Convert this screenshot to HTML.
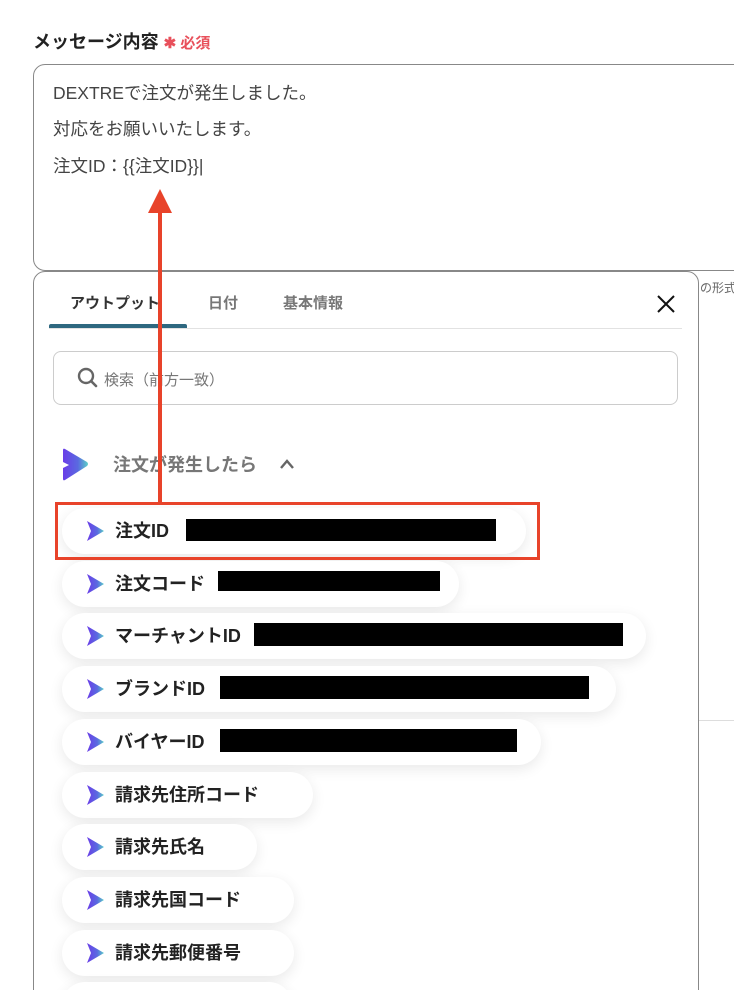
<!DOCTYPE html>
<html><head><meta charset="utf-8"><style>
*{box-sizing:border-box;margin:0;padding:0}
html,body{width:734px;height:990px;overflow:hidden}
body{background:#fff;font-family:"Liberation Sans","Noto Sans CJK JP",sans-serif;color:#333}
#w{position:relative;width:734px;height:990px;overflow:hidden}
.abs{position:absolute}
.label{left:33px;top:28px;font-size:18px;font-weight:bold;color:#222}
.label span{color:#e8505b;font-size:15px}
.ta{left:33px;top:64px;width:740px;height:207px;border:1px solid #888;border-radius:12px}
.ta p{position:absolute;left:19px;font-size:17.5px;color:#444}
.panel{left:33px;top:271px;width:666px;height:760px;border:1px solid #888;border-radius:12px;background:#fff}
.tab{top:292px;font-size:15px;font-weight:bold;color:#777}
.pill{position:absolute;left:62px;height:46px;border-radius:23px;background:#fff;box-shadow:0 4px 14px rgba(0,0,0,0.09);font-size:18px;font-weight:bold;color:#222}
.pill svg{position:absolute;left:24px;top:13px}
.pill .t{position:absolute;left:53px;top:9px;white-space:nowrap}
.blk{position:absolute;background:#000;height:22px}
</style></head><body><div id="w">
<svg width="0" height="0" style="position:absolute"><defs><linearGradient id="g" x1="0" x2="1" y1="0" y2="0"><stop offset="0" stop-color="#6a3de8"/><stop offset="0.6" stop-color="#5a6ae0"/><stop offset="1" stop-color="#5cd0c8"/></linearGradient></defs></svg>
<div class="abs label">メッセージ内容 <span>✱ 必須</span></div>
<div class="abs ta">
<p style="top:15px">DEXTREで注文が発生しました。</p>
<p style="top:51px">対応をお願いいたします。</p>
<p style="top:88px">注文ID：{{注文ID}}|</p>
</div>
<div class="abs" style="left:700px;top:279px;font-size:12px;color:#666;white-space:nowrap">の形式</div>
<div class="abs" style="left:698px;top:720px;width:40px;height:1px;background:#ddd"></div>
<div class="abs panel"></div>
<div class="abs tab" style="left:70px;color:#333">アウトプット</div>
<div class="abs tab" style="left:208px">日付</div>
<div class="abs tab" style="left:283px">基本情報</div>
<svg class="abs" style="left:656px;top:294px" width="20" height="20" viewBox="0 0 20 20"><path d="M2 2L18 18M18 2L2 18" stroke="#111" stroke-width="2"/></svg>
<div class="abs" style="left:49px;top:328px;width:633px;height:1px;background:#e2e2e2"></div>
<div class="abs" style="left:49px;top:324px;width:138px;height:4px;background:#2e6880;border-radius:2px 2px 0 0"></div>
<div class="abs" style="left:53px;top:351px;width:625px;height:54px;border:1px solid #ccc;border-radius:8px"></div>
<svg class="abs" style="left:76px;top:366px" width="24" height="24" viewBox="0 0 24 24"><circle cx="10" cy="10" r="7" fill="none" stroke="#666" stroke-width="2.4"/><path d="M15 15l5 5" stroke="#666" stroke-width="2.6" stroke-linecap="round"/></svg>
<div class="abs" style="left:104px;top:369px;font-size:15px;color:#777">検索（前方一致）</div>
<svg class="abs" style="left:60px;top:448px" width="30" height="34" viewBox="0 0 30 34"><path d="M3 2 Q3 0 5 1 L27 14 Q29 16 27 18 L5 32 Q3 33 3 31 L3 20 L9 17 L3 14 Z" fill="url(#g)"/></svg>
<div class="abs" style="left:113px;top:451px;font-size:18px;font-weight:bold;color:#777">注文が発生したら</div>
<svg class="abs" style="left:279px;top:458px" width="16" height="12" viewBox="0 0 16 12"><path d="M2 10 L8 3 L14 10" fill="none" stroke="#666" stroke-width="2.4"/></svg>

<div class="pill" style="top:508px;width:464px"><svg width="18" height="20" viewBox="0 0 18 20"><path d="M1 0 L18 10 L1 20 L5 10Z" fill="url(#g)"/></svg><span class="t">注文ID</span></div>
<div class="blk" style="left:186px;top:519px;width:310px"></div>
<div class="pill" style="top:561px;width:397px"><svg width="18" height="20" viewBox="0 0 18 20"><path d="M1 0 L18 10 L1 20 L5 10Z" fill="url(#g)"/></svg><span class="t">注文コード</span></div>
<div class="blk" style="left:218px;top:571px;width:222px;height:20px"></div>
<div class="pill" style="top:613px;width:584px"><svg width="18" height="20" viewBox="0 0 18 20"><path d="M1 0 L18 10 L1 20 L5 10Z" fill="url(#g)"/></svg><span class="t">マーチャントID</span></div>
<div class="blk" style="left:254px;top:623px;width:369px;height:23px"></div>
<div class="pill" style="top:666px;width:554px"><svg width="18" height="20" viewBox="0 0 18 20"><path d="M1 0 L18 10 L1 20 L5 10Z" fill="url(#g)"/></svg><span class="t">ブランドID</span></div>
<div class="blk" style="left:220px;top:676px;width:369px;height:23px"></div>
<div class="pill" style="top:719px;width:479px"><svg width="18" height="20" viewBox="0 0 18 20"><path d="M1 0 L18 10 L1 20 L5 10Z" fill="url(#g)"/></svg><span class="t">バイヤーID</span></div>
<div class="blk" style="left:220px;top:729px;width:297px;height:23px"></div>
<div class="pill" style="top:772px;width:251px"><svg width="18" height="20" viewBox="0 0 18 20"><path d="M1 0 L18 10 L1 20 L5 10Z" fill="url(#g)"/></svg><span class="t">請求先住所コード</span></div>
<div class="pill" style="top:824px;width:195px"><svg width="18" height="20" viewBox="0 0 18 20"><path d="M1 0 L18 10 L1 20 L5 10Z" fill="url(#g)"/></svg><span class="t">請求先氏名</span></div>
<div class="pill" style="top:877px;width:232px"><svg width="18" height="20" viewBox="0 0 18 20"><path d="M1 0 L18 10 L1 20 L5 10Z" fill="url(#g)"/></svg><span class="t">請求先国コード</span></div>
<div class="pill" style="top:930px;width:232px"><svg width="18" height="20" viewBox="0 0 18 20"><path d="M1 0 L18 10 L1 20 L5 10Z" fill="url(#g)"/></svg><span class="t">請求先郵便番号</span></div>
<div class="pill" style="top:982px;width:230px"></div>

<div class="abs" style="left:55px;top:502px;width:485px;height:58px;border:3px solid #e8432a"></div>
<div class="abs" style="left:158px;top:210px;width:4px;height:292px;background:#e8432a"></div>
<svg class="abs" style="left:148px;top:189px" width="24" height="24" viewBox="0 0 24 24"><path d="M12 0 L24 24 L0 24Z" fill="#e8432a"/></svg>
</div></body></html>
